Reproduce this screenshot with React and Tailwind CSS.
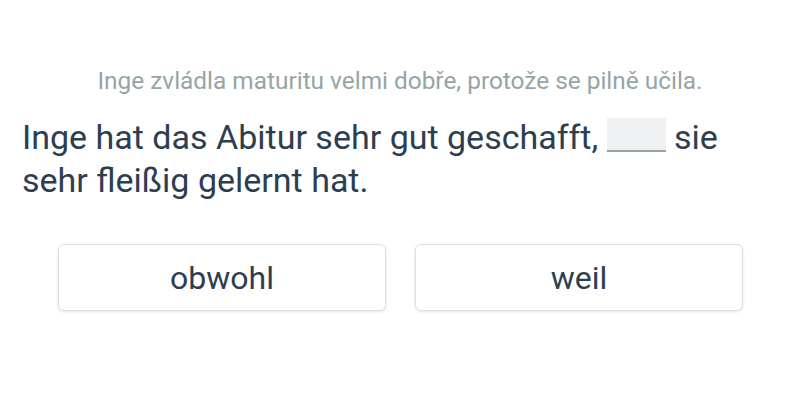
const App = () => {
  return (
    <div className="w-[800px] h-[400px] bg-white font-['Roboto',sans-serif] text-[#2c3e50]">
      <div className="pt-[65px] px-[22px]">
        <div className="text-center text-[24.4px] leading-[32px] text-[#95a5a6]">
          Inge zvládla maturitu velmi dobře, protože se pilně učila.
        </div>
        <div className="mt-[19px] text-[34px] leading-[43px]">
          Inge hat das Abitur sehr gut geschafft,{" "}
          <span className="inline-block align-[-3px] w-[59px] h-[34px] bg-[#eef0f2] border-b-2 border-[#95a5a6]"></span>{" "}
          sie sehr fleißig gelernt hat.
        </div>
      </div>
      <div className="mt-[42px] pl-[58px] flex gap-[29px]">
        <button className="w-[328px] h-[67px] rounded-[6px] border border-[#dedede] bg-white shadow-[0_1px_3px_rgba(0,0,0,0.1)] text-[32px] text-[#2c3e50]">
          obwohl
        </button>
        <button className="w-[328px] h-[67px] rounded-[6px] border border-[#dedede] bg-white shadow-[0_1px_3px_rgba(0,0,0,0.1)] text-[32px] text-[#2c3e50]">
          weil
        </button>
      </div>
    </div>
  );
};
export default App;
